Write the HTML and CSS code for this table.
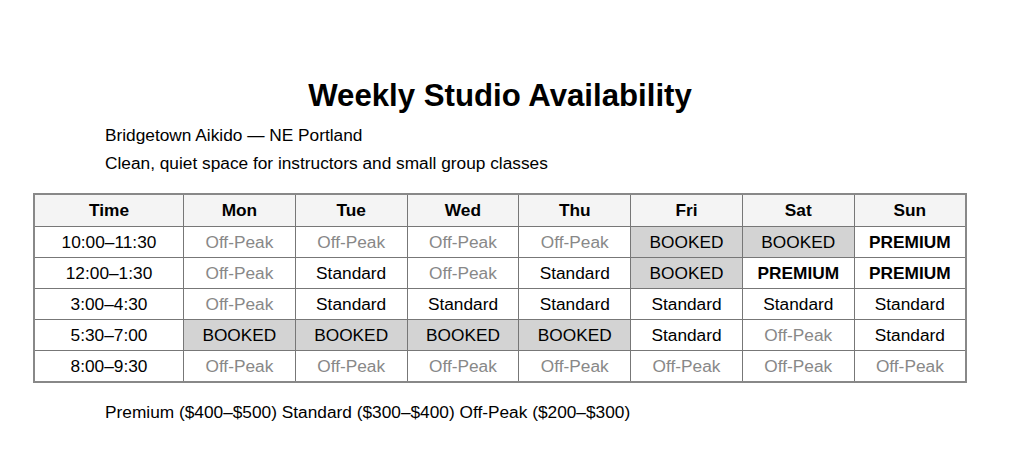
FILE: index.html
```html
<!DOCTYPE html>
<html lang="en">
<head>
<meta charset="utf-8">
<title>Weekly Studio Availability</title>
<link rel="stylesheet" href="styles.css">
</head>
<body>
<main class="page">
  <h1 class="title">Weekly Studio Availability</h1>
  <p class="sub">Bridgetown Aikido — NE Portland</p>
  <p class="sub">Clean, quiet space for instructors and small group classes</p>
  <table class="grid">
    <thead>
      <tr><th class="time">Time</th><th>Mon</th><th>Tue</th><th>Wed</th><th>Thu</th><th>Fri</th><th>Sat</th><th>Sun</th></tr>
    </thead>
    <tbody>
      <tr><td>10:00–11:30</td><td class="off">Off-Peak</td><td class="off">Off-Peak</td><td class="off">Off-Peak</td><td class="off">Off-Peak</td><td class="booked">BOOKED</td><td class="booked">BOOKED</td><td class="prem">PREMIUM</td></tr>
      <tr><td>12:00–1:30</td><td class="off">Off-Peak</td><td>Standard</td><td class="off">Off-Peak</td><td>Standard</td><td class="booked">BOOKED</td><td class="prem">PREMIUM</td><td class="prem">PREMIUM</td></tr>
      <tr><td>3:00–4:30</td><td class="off">Off-Peak</td><td>Standard</td><td>Standard</td><td>Standard</td><td>Standard</td><td>Standard</td><td>Standard</td></tr>
      <tr><td>5:30–7:00</td><td class="booked">BOOKED</td><td class="booked">BOOKED</td><td class="booked">BOOKED</td><td class="booked">BOOKED</td><td>Standard</td><td class="off">Off-Peak</td><td>Standard</td></tr>
      <tr><td>8:00–9:30</td><td class="off">Off-Peak</td><td class="off">Off-Peak</td><td class="off">Off-Peak</td><td class="off">Off-Peak</td><td class="off">Off-Peak</td><td class="off">Off-Peak</td><td class="off">Off-Peak</td></tr>
    </tbody>
  </table>
  <p class="legend">Premium ($400–$500) Standard ($300–$400) Off-Peak ($200–$300)</p>
</main>
</body>
</html>
```

FILE: styles.css
```css
html, body {
  margin: 0;
  padding: 0;
  background: #fff;
}
body {
  font-family: "Liberation Sans", Arial, Helvetica, sans-serif;
  color: #000;
}
.page {
  width: 934px;
  margin-left: 33px;
  padding-top: 76px;
}
.title {
  margin: 0 0 8px;
  text-align: center;
  font-size: 31.2px;
  font-weight: bold;
  line-height: 40px;
}
.sub {
  margin: 0 0 6px 72px;
  font-size: 17.3px;
  line-height: 22px;
}
.grid {
  margin-top: 19px;
  width: 934px;
  border-collapse: collapse;
  border: 2px solid #888;
  table-layout: fixed;
  font-size: 17.3px;
}
.grid th, .grid td {
  border: 1px solid #777;
  height: 30px;
  padding: 0;
  text-align: center;
  vertical-align: middle;
}
.grid th {
  height: 31px;
  background: #f4f4f4;
  font-weight: bold;
}
.grid th.time { width: 148px; }
.off { color: #888; }
.booked { background: #d3d3d3; }
.prem { font-weight: bold; }
.legend {
  margin: 18px 0 0 72px;
  font-size: 17.3px;
  line-height: 22px;
}
```
